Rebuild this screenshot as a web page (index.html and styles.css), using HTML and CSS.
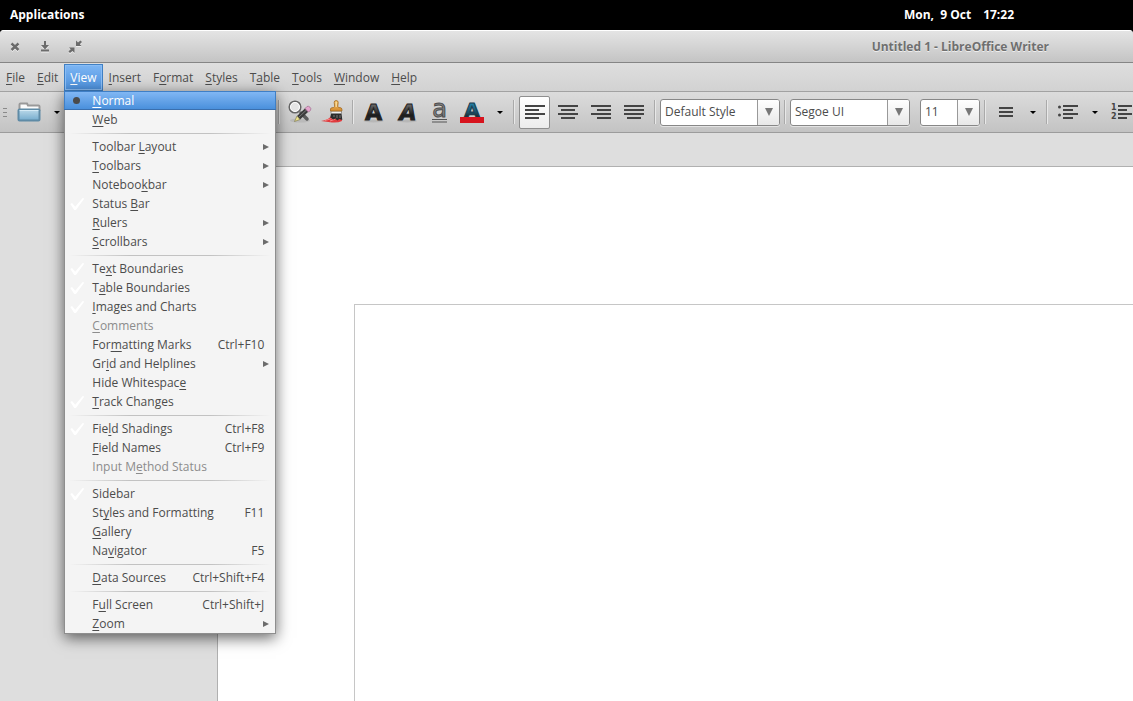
FILE: index.html
```html
<!DOCTYPE html>
<html lang="en">
<head>
<meta charset="utf-8">
<title>Untitled 1 - LibreOffice Writer</title>
<link rel="stylesheet" href="styles.css">
</head>
<body>
<header class="panel">
  <button class="panel-item">Applications</button>
  <div class="clock"><span>Mon,&nbsp; 9 Oct</span><time>17:22</time></div>
</header>

<main class="window">
  <div class="titlebar">
    <div class="window-controls">
      <button aria-label="Close"><svg width="14" height="14" viewBox="0 0 14 14"><path d="M3.500 3.500l7 6.500M10.500 3.500l-7 6.500" stroke="#6b6b6b" stroke-width="2.400" fill="none"/></svg></button>
      <button aria-label="Minimize"><svg width="14" height="14" viewBox="0 0 14 14"><path d="M6 1h2v4h3L7 9.500 3 5h3zM3 9.500h8v2H3z" fill="#6b6b6b"/></svg></button>
      <button aria-label="Restore"><svg width="14" height="14" viewBox="0 0 14 14"><path d="M8 .5v5.500h5.500L11.800 4.300 14 2 12.500.5 10 2.500zM6.500 13V7.500H1l1.700 1.700L.5 11.500 2 13l2.500-2z" fill="#6b6b6b"/></svg></button>
    </div>
    <h1 class="title">Untitled 1 - LibreOffice Writer</h1>
  </div>

  <nav class="menubar">
    <button class="menu-title"><u>F</u>ile</button>
    <button class="menu-title"><u>E</u>dit</button>
    <div class="menu-host">
      <button class="menu-title open" aria-expanded="true"><u>V</u>iew</button>
      <div class="menu" role="menu">
        <button class="item active dot"><span><u>N</u>ormal</span></button>
        <button class="item"><span><u>W</u>eb</span></button>
        <hr>
        <button class="item sub"><span>Toolbar <u>L</u>ayout</span></button>
        <button class="item sub"><span><u>T</u>oolbars</span></button>
        <button class="item sub"><span>Noteboo<u>k</u>bar</span></button>
        <button class="item checked"><span>Status <u>B</u>ar</span></button>
        <button class="item sub"><span><u>R</u>ulers</span></button>
        <button class="item sub"><span><u>S</u>crollbars</span></button>
        <hr>
        <button class="item checked"><span>Te<u>x</u>t Boundaries</span></button>
        <button class="item checked"><span>T<u>a</u>ble Boundaries</span></button>
        <button class="item checked"><span><u>I</u>mages and Charts</span></button>
        <button class="item" disabled><span><u>C</u>omments</span></button>
        <button class="item"><span>For<u>m</u>atting Marks</span><kbd>Ctrl+F10</kbd></button>
        <button class="item sub"><span>Gr<u>i</u>d and Helplines</span></button>
        <button class="item"><span>Hide Whitespac<u>e</u></span></button>
        <button class="item checked"><span><u>T</u>rack Changes</span></button>
        <hr>
        <button class="item checked"><span>Fie<u>l</u>d Shadings</span><kbd>Ctrl+F8</kbd></button>
        <button class="item"><span><u>F</u>ield Names</span><kbd>Ctrl+F9</kbd></button>
        <button class="item" disabled><span>Input M<u>e</u>thod Status</span></button>
        <hr>
        <button class="item checked"><span>Sidebar</span></button>
        <button class="item"><span>St<u>y</u>les and Formatting</span><kbd>F11</kbd></button>
        <button class="item"><span><u>G</u>allery</span></button>
        <button class="item"><span>Na<u>v</u>igator</span><kbd>F5</kbd></button>
        <hr>
        <button class="item"><span><u>D</u>ata Sources</span><kbd>Ctrl+Shift+F4</kbd></button>
        <hr>
        <button class="item"><span>F<u>u</u>ll Screen</span><kbd>Ctrl+Shift+J</kbd></button>
        <button class="item sub"><span><u>Z</u>oom</span></button>
      </div>
    </div>
    <button class="menu-title"><u>I</u>nsert</button>
    <button class="menu-title">F<u>o</u>rmat</button>
    <button class="menu-title"><u>S</u>tyles</button>
    <button class="menu-title">T<u>a</u>ble</button>
    <button class="menu-title"><u>T</u>ools</button>
    <button class="menu-title"><u>W</u>indow</button>
    <button class="menu-title"><u>H</u>elp</button>
  </nav>

  <div class="toolbar">
    <svg width="0" height="0" class="defs" aria-hidden="true">
      <defs>
        <linearGradient id="ink" x1="0" y1="0" x2="0" y2="1"><stop offset=".2" stop-color="#666"/><stop offset=".6" stop-color="#1c1c1c"/><stop offset="1" stop-color="#333"/></linearGradient>
        <linearGradient id="blue" x1="0" y1="0" x2="0" y2="1"><stop offset=".2" stop-color="#2383ad"/><stop offset=".6" stop-color="#1c4f66"/><stop offset=".8" stop-color="#222"/></linearGradient>
        <linearGradient id="folder" x1="0" y1="0" x2="0" y2="1"><stop offset="0" stop-color="#bcdaea"/><stop offset="1" stop-color="#74abcd"/></linearGradient>
        <linearGradient id="wood" x1="0" y1="0" x2="0" y2="1"><stop offset="0" stop-color="#f3c66d"/><stop offset="1" stop-color="#d58b2f"/></linearGradient>
      </defs>
    </svg>
    <div class="group group-file">
      <span class="grip"></span>
      <button class="tool" aria-label="Open"><svg width="24" height="24" viewBox="0 0 24 24"><path d="M1.500 10V4.500q0-1 1-1H9l1 2h10.500q1 0 1 1V10z" fill="#fbfbfb" stroke="#999"/><rect x=".5" y="9.500" width="21" height="11" rx="1" fill="url(#folder)" stroke="#5f8ba6"/><path d="M1.500 10.500h19" stroke="#d5eaf5" stroke-width="1"/></svg></button>
      <button class="drop" aria-label="Open recent"></button>
    </div>
    <span class="sep"></span>
    <div class="group">
      <button class="tool" aria-label="Find and replace"><svg width="24" height="24" viewBox="0 0 24 24"><ellipse cx="12" cy="20.500" rx="10" ry="2" fill="#aaa" opacity=".5"/><path d="M13 13l6 6" stroke="#5c5c5c" stroke-width="3.500" stroke-linecap="round"/><circle cx="7" cy="7" r="5.800" fill="#e6e6e6" stroke="#666" stroke-width="1.500"/><circle cx="7" cy="7" r="4.500" fill="none" stroke="#fff" stroke-width="1"/><path d="M9 16L17.500 8l3 3.500L12 19.500z" fill="#3b3b3b"/><path d="M11 17l8-7.500" stroke="#777" stroke-width="1"/><path d="M9 16l-2.500 5.500 5.500-2z" fill="#efe58d" stroke="#777043" stroke-width=".6"/><path d="M17 8.500l2-2q1.500-.8 3 .7t.5 3l-2 2z" fill="#e4a5cd" stroke="#9d6b8e" stroke-width=".7"/></svg></button>
      <button class="tool" aria-label="Clone formatting"><svg width="24" height="24" viewBox="0 0 24 24"><path d="M0 21q8-1 10-5h10l1 5q-4 2-10 1.500z" fill="#e03b3e"/><path d="M4 20.500q6-1 9-4M9 21q5-1 7-4" stroke="#f58383" stroke-width="1" fill="none"/><path d="M10 13.500h10.500l.8 6.500-3-1-2 1.500-2-2-2 1-3-2z" fill="#2c2c2c"/><path d="M13 15v2M16 15v3M19 15v3" stroke="#777" stroke-width="1"/><path d="M10 11h10.500v2.500H10z" fill="#eee" stroke="#777" stroke-width=".7"/><path d="M9.500 11V9q0-1.500 3-1.500l1.200-1-.5-4q0-2 2-2t2 2l-.5 4 1.200 1q3 0 3 1.500v2z" fill="url(#wood)" stroke="#a36a22" stroke-width=".8"/><path d="M15.200 2v5" stroke="#fae1a7" stroke-width="1.200"/></svg></button>
    </div>
    <span class="sep"></span>
    <div class="group">
      <button class="tool" aria-label="Bold"><svg width="24" height="24" viewBox="0 0 24 24"><ellipse cx="11.500" cy="21" rx="10" ry="1.500" fill="#aaa" opacity=".6"/><text x="11.500" y="20" text-anchor="middle" class="letter bold">A</text></svg></button>
      <button class="tool" aria-label="Italic"><svg width="24" height="24" viewBox="0 0 24 24"><ellipse cx="12" cy="21" rx="10" ry="1.500" fill="#aaa" opacity=".6"/><text x="13" y="20" text-anchor="middle" class="letter bold slant">A</text></svg></button>
      <button class="tool" aria-label="Underline"><svg width="24" height="24" viewBox="0 0 24 24"><text x="11.500" y="17" text-anchor="middle" class="letter low">a</text><path d="M4 19.500h15M4 22h15" stroke="#555" stroke-width="1.200"/></svg></button>
      <button class="tool" aria-label="Font color"><svg width="24" height="24" viewBox="0 0 24 24"><text x="11" y="17" text-anchor="middle" class="letter color">A</text><path d="M-1 17h24v6H-1z" fill="#d7141e"/></svg></button>
      <button class="drop" aria-label="Font color options"></button>
    </div>
    <span class="sep"></span>
    <div class="group group-align">
      <button class="tool pressed" aria-label="Align left"><svg width="20" height="16" viewBox="0 0 20 16"><path d="M0 2h20M0 6h14M0 10h20M0 14h14"/></svg></button>
      <button class="tool" aria-label="Center"><svg width="20" height="16" viewBox="0 0 20 16"><path d="M0 2h20M3 6h14M0 10h20M3 14h14"/></svg></button>
      <button class="tool" aria-label="Align right"><svg width="20" height="16" viewBox="0 0 20 16"><path d="M0 2h20M6 6h14M0 10h20M6 14h14"/></svg></button>
      <button class="tool" aria-label="Justify"><svg width="20" height="16" viewBox="0 0 20 16"><path d="M0 2h20M0 6h20M0 10h20M3 14h14"/></svg></button>
    </div>
    <span class="sep"></span>
    <div class="combo"><input aria-label="Paragraph style" value="Default Style"><button aria-label="Choose style"></button></div>
    <span class="sep"></span>
    <div class="combo"><input aria-label="Font name" value="Segoe UI"><button aria-label="Choose font"></button></div>
    <div class="combo small"><input aria-label="Font size" value="11"><button aria-label="Choose size"></button></div>
    <span class="sep"></span>
    <div class="group">
      <button class="tool" aria-label="Line spacing"><svg width="14" height="12" viewBox="0 0 14 12"><path d="M0 2h14M0 6h14M0 10h14"/></svg></button>
      <button class="drop" aria-label="Line spacing options"></button>
    </div>
    <span class="sep"></span>
    <div class="group">
      <button class="tool" aria-label="Bullets"><svg width="20" height="16" viewBox="0 0 20 16"><path d="M5 2h15M5 6h10M5 10h15M5 14h10"/><circle cx="1.500" cy="3" r="1.500" fill="#444"/><circle cx="1.500" cy="11" r="1.500" fill="#444"/></svg></button>
      <button class="drop" aria-label="Bullet options"></button>
      <button class="tool" aria-label="Numbering"><svg width="20" height="16" viewBox="0 0 20 16"><path d="M6 2h14M6 6h9M6 10h14M6 14h9"/><text x="-1" y="6" class="digit">1</text><text x="-1" y="15" class="digit">2</text></svg></button>
    </div>
  </div>

  <div class="workspace">
    <article class="page"><div class="text-area"></div></article>
  </div>
</main>
</body>
</html>
```
FILE: styles.css
```css
* { box-sizing: border-box; }

body {
  margin: 0;
  height: 100vh;
  display: flex;
  flex-direction: column;
  overflow: hidden;
  background: #000;
  color: #4c4c4c;
  font: 12px/18px "Open Sans", sans-serif;
}

button, input {
  margin: 0;
  padding: 0;
  border: 0;
  background: none;
  color: inherit;
  font: inherit;
}

u {
  text-decoration-thickness: 1px;
  text-underline-offset: 2px;
  text-decoration-skip-ink: none;
}

/* Desktop panel */
.panel {
  flex: none;
  display: flex;
  align-items: center;
  justify-content: space-between;
  height: 30px;
  padding: 0 119px 0 10px;
  color: #fff;
  font-weight: bold;
}
.clock { display: flex; gap: 12px; }

/* Window frame */
.window {
  flex: 1;
  min-height: 0;
  display: flex;
  flex-direction: column;
  border-radius: 4px 4px 0 0;
  overflow: hidden;
  background: #dedede;
}
.titlebar {
  flex: none;
  display: flex;
  align-items: center;
  justify-content: space-between;
  height: 33px;
  padding: 0 84px 0 8px;
  border-top: 1px solid #fff;
  border-bottom: 1px solid #858585;
  background: linear-gradient(#e4e4e4, #c4c4c4);
}
.window-controls { display: flex; gap: 16px; }
.window-controls button { display: flex; }
.window-controls svg { filter: drop-shadow(0 1px 0 #eee); }
.title {
  margin: 0;
  color: #6f6f6f;
  font-size: 12px;
  text-shadow: 0 1px 0 #eee;
}

/* Menu bar */
.menubar {
  flex: none;
  display: flex;
  align-items: stretch;
  height: 29px;
  padding-top: 1px;
  border-bottom: 1px solid #a2a2a2;
  background: linear-gradient(#dedede, #d2d2d2);
}
.menu-host { position: relative; display: flex; }
.menu-title { padding: 0 6px; }
.menu-title.open {
  border: 1px solid #4080c4;
  padding: 0 5px;
  background: linear-gradient(#7db6f4, #4c90dc);
  box-shadow: inset 0 0 0 1px #8abdf5;
  color: #fff;
}

/* Drop-down menu */
.menu {
  position: absolute;
  z-index: 2;
  top: 100%;
  left: 0;
  width: 212px;
  border: 1px solid #8e8e8e;
  border-top: 0;
  background: #f4f4f4;
  box-shadow: 0 4px 14px rgba(0, 0, 0, .6);
}
.item {
  position: relative;
  display: flex;
  justify-content: space-between;
  width: 100%;
  height: 19px;
  padding: 0 11px 0 27px;
  text-align: left;
  line-height: 19px;
}
.item kbd { font: inherit; }
.item:disabled { color: #8c8c8c; }
.item.active {
  width: 212px;
  margin-left: -1px;
  padding-left: 28px;
  border-bottom: 1px solid #3a6fae;
  background: linear-gradient(#84b9f5, #4a90dc);
  box-shadow: inset 1px 1px 0 #3f7fc6, inset -1px 0 0 #3f7fc6;
  color: #fff;
}
.dot::before {
  content: "";
  position: absolute;
  left: 9px;
  top: 6px;
  width: 7px;
  height: 7px;
  border-radius: 50%;
  background: #4a4a4a;
}
.checked::before {
  content: "";
  position: absolute;
  left: 5px;
  top: 4px;
  width: 14px;
  height: 12px;
  background: #fff;
  clip-path: polygon(0 50%, 12% 42%, 35% 72%, 88% 0, 100% 4%, 40% 100%, 28% 100%);
}
.sub::after {
  content: "";
  position: absolute;
  right: 6px;
  top: 7px;
  border: 3px solid transparent;
  border-left: 6px solid #6c6c6c;
  border-right: 0;
}
.menu hr {
  height: 8px;
  margin: 0 4px;
  border: 0;
  background:
    linear-gradient(90deg, transparent, #c2c2c2 30%, #c2c2c2 70%, transparent) 0 4px / 100% 1px no-repeat;
}

/* Toolbar */
.toolbar {
  flex: none;
  display: flex;
  align-items: center;
  height: 41px;
  border-bottom: 1px solid #9c9c9c;
  background: linear-gradient(#dcdcdc, #c3c3c3);
}
.defs { position: absolute; }
.group { flex: none; display: flex; align-items: center; }
.group-file { width: 275px; }
.group-align { margin-right: 1px; }
.grip {
  width: 4px;
  height: 9px;
  margin: 0 6px 0 3px;
  background: repeating-linear-gradient(#8a8a8a 0 1px, transparent 1px 4px);
}
.sep {
  flex: none;
  width: 2px;
  height: 24px;
  margin: 0 3px;
  background: linear-gradient(90deg, #aaa 50%, #e8e8e8 50%);
}
.tool {
  flex: none;
  display: flex;
  align-items: center;
  justify-content: center;
  width: 33px;
  height: 33px;
}
.tool svg { overflow: visible; stroke-width: 2px; }
.tool svg > path:not([stroke]):not([fill]) { stroke: #444; }
.pressed {
  width: 31px;
  margin: 0 1px;
  border: 1px solid #8f8f8f;
  border-radius: 2px;
  background: linear-gradient(#fff, #ececec);
}
.drop {
  flex: none;
  display: flex;
  align-items: center;
  justify-content: center;
  width: 21px;
  height: 33px;
}
.drop::after {
  content: "";
  border: 3px solid transparent;
  border-top-color: #000;
  border-bottom: 0;
}
.letter {
  font-family: "DejaVu Sans", sans-serif;
  font-weight: bold;
  fill: url(#ink);
  stroke: #222;
  stroke-width: 1px;
}
.bold { font-size: 22px; }
.slant { font-style: italic; }
.low { font-size: 24px; font-weight: normal; fill: #888; stroke: #4c4c4c; }
.color { font-size: 20px; fill: url(#blue); stroke: #183c4d; }
.digit {
  font: bold 8px "DejaVu Sans", sans-serif;
  fill: #444;
  stroke: none;
}

/* Combo boxes */
.combo {
  flex: none;
  display: flex;
  width: 120px;
  height: 27px;
  margin: 0 1px;
  border: 1px solid #878787;
  border-radius: 3px;
  overflow: hidden;
  background: #fff;
  box-shadow: 0 1px 0 #e4e4e4;
}
.combo input { flex: 1; min-width: 0; padding: 0 4px; outline: 0; }
.combo button {
  display: flex;
  align-items: center;
  justify-content: center;
  width: 22px;
  border-left: 1px solid #999;
  background: linear-gradient(#fff, #e8e8e8);
}
.combo button::after {
  content: "";
  border: 4px solid transparent;
  border-top: 8px solid #777;
  border-bottom: 0;
}
.combo.small { width: 60px; margin-left: 9px; }

/* Document */
.workspace {
  flex: 1;
  min-height: 0;
  display: flex;
  padding: 33px 0 0 217px;
}
.page {
  flex: 1;
  padding: 137px 0 0 136px;
  border-top: 1px solid #b0b0b0;
  border-left: 1px solid #b0b0b0;
  background: #fff;
  display: flex;
}
.text-area {
  flex: 1;
  border-top: 1px solid #c6c6c6;
  border-left: 1px solid #c6c6c6;
}
```
